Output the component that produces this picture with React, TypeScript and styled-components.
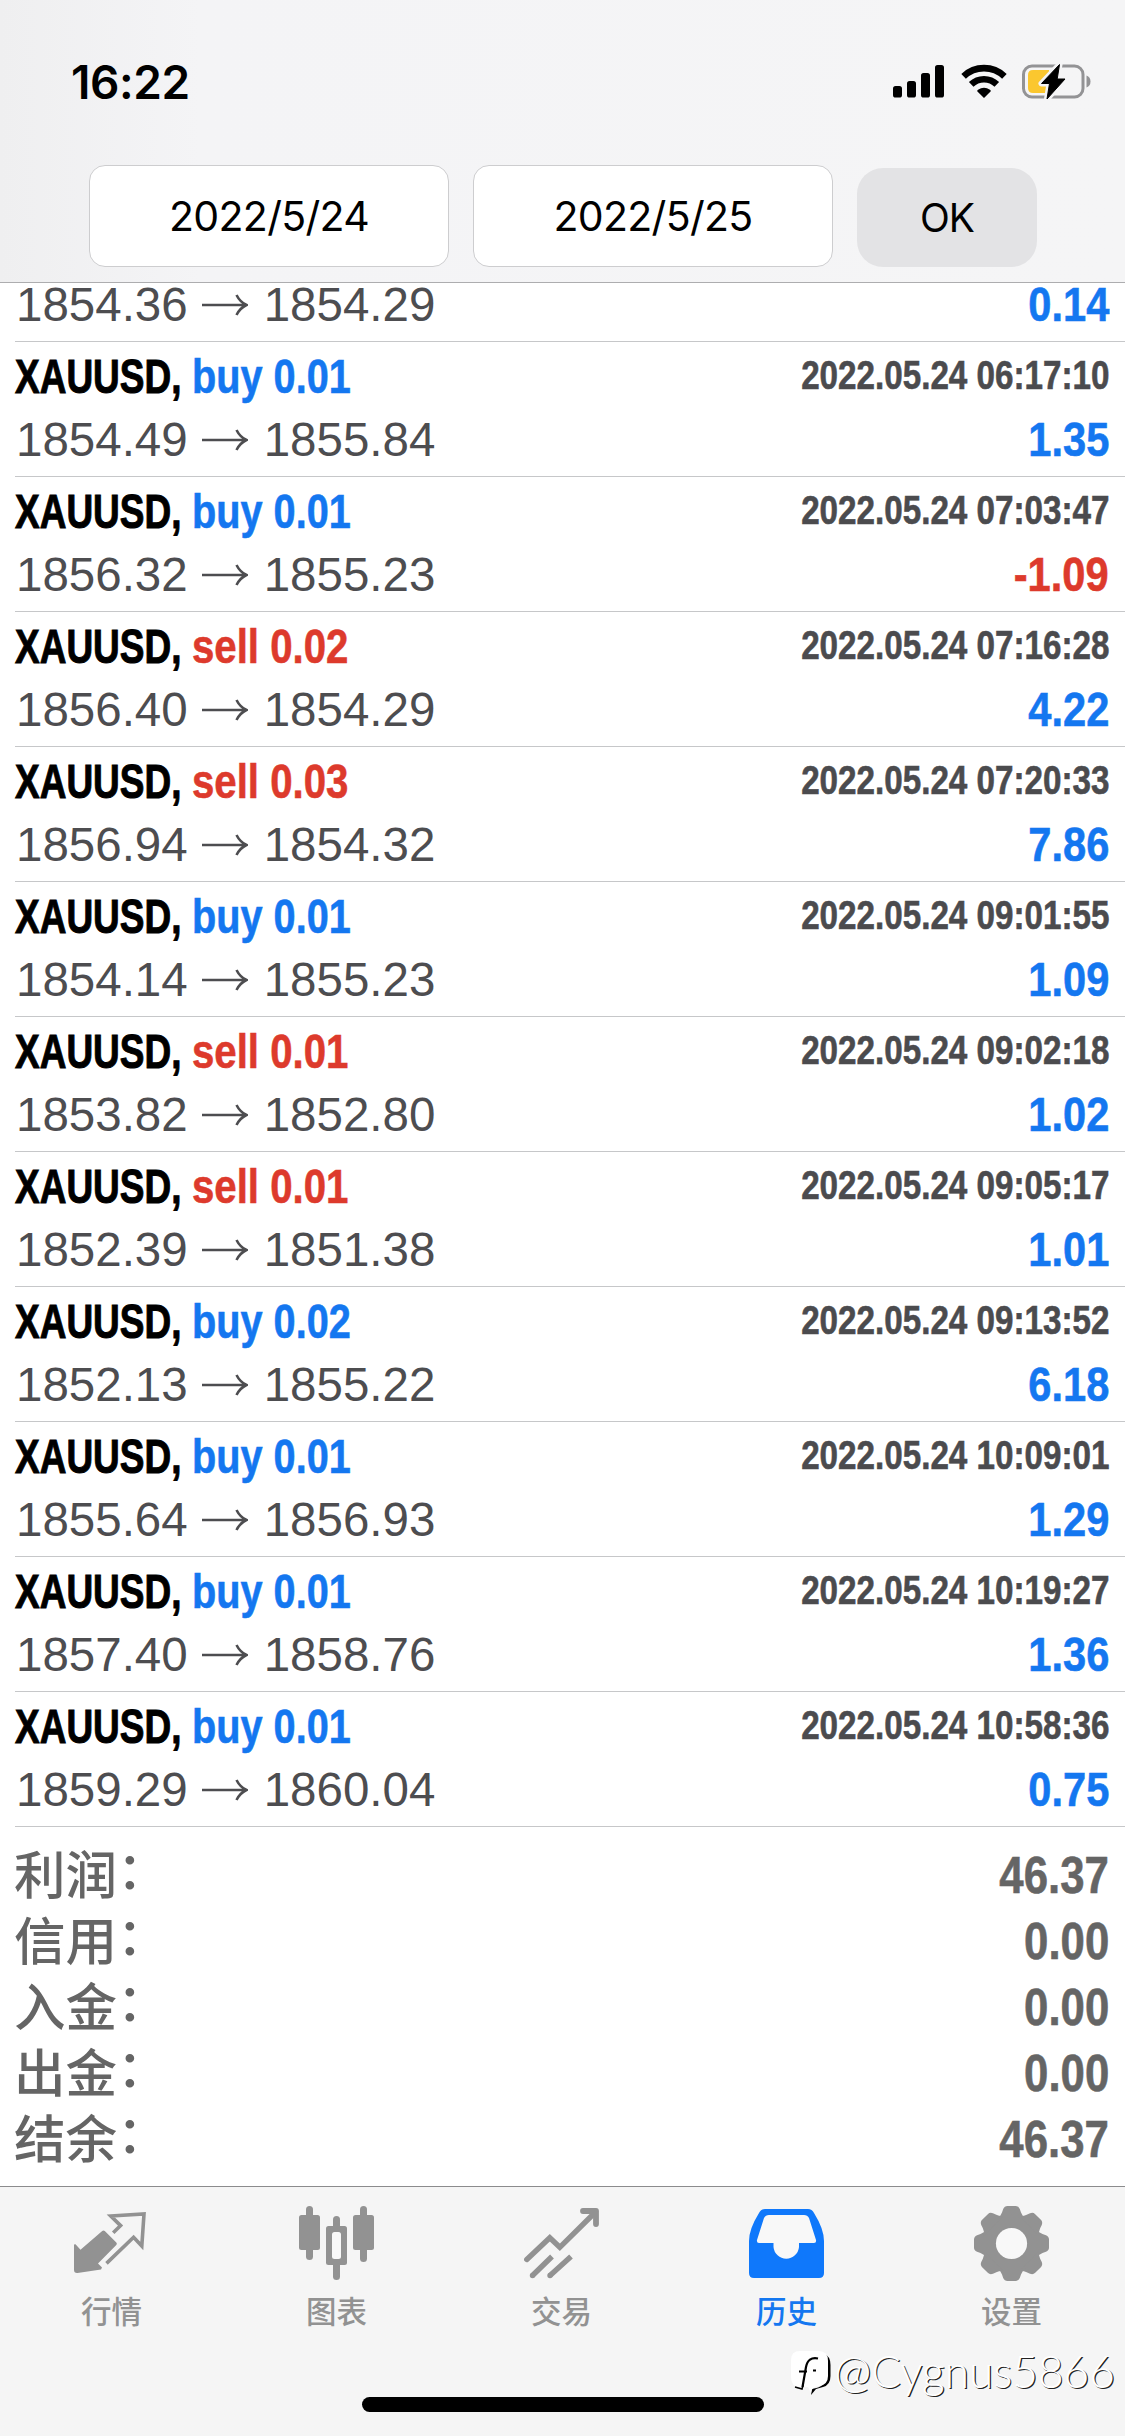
import React from "react";
import styled, { createGlobalStyle } from "styled-components";

const GlobalStyle = createGlobalStyle`
  * { box-sizing: border-box; }
  body { margin: 0; background: #fff; }
`;

const BLUE = "#1477f0";
const RED = "#dd3a2c";
const GREY = "#929292";

const Screen = styled.div`
  width: 1125px;
  height: 2436px;
  display: flex;
  flex-direction: column;
  overflow: hidden;
  background: #fff;
  font-family: "Liberation Sans", "Noto Sans CJK SC", sans-serif;
`;

const Header = styled.header`
  position: relative;
  z-index: 1;
  height: 283px;
  flex: none;
  border-bottom: 1px solid #adadaf;
  background: linear-gradient(90deg, #efeff0 0, #f4f4f6 200px, #f5f5f6 100%);
  font-family: Inter, sans-serif;
`;

const StatusBar = styled.div`
  height: 165px;
  display: flex;
  justify-content: space-between;
  align-items: flex-start;
  padding: 52px 34px 0 71px;
`;

const Clock = styled.div`
  font-size: 46px;
  line-height: 60px;
  font-weight: 600;
  letter-spacing: -0.4px;
  color: #000;
`;

const StatusIcons = styled.div`
  display: flex;
  align-items: flex-start;
  padding-top: 12px;
  svg { display: block; }
`;

const SignalSvg = styled.svg`margin-right: 16px;`;
const WifiSvg = styled.svg`margin-right: 15px;`;

const Filters = styled.div`
  display: flex;
  align-items: flex-start;
  padding-left: 89px;
`;

const DateField = styled.div`
  width: 360px;
  height: 102px;
  margin-right: 24px;
  border: 1px solid #cdcdcf;
  border-radius: 16px;
  background: #fff;
  display: flex;
  align-items: center;
  justify-content: center;
  font-size: 41px;
  letter-spacing: -0.7px;
  color: #000;
`;

const OkButton = styled.button`
  width: 180px;
  height: 99px;
  margin: 3px 0 0;
  padding: 0;
  border: 0;
  border-radius: 26px;
  background: #e3e3e5;
  font: 400 39px Inter, sans-serif;
  letter-spacing: -1px;
  color: #000;
`;

const List = styled.main`
  flex: none;
  display: flex;
  flex-direction: column;
  padding-left: 15px;
`;

const Row = styled.div<{ $clipped?: boolean }>`
  height: ${(p) => (p.$clipped ? 59 : 135)}px;
  display: flex;
  flex-direction: column;
  justify-content: flex-end;
  gap: 3px;
  padding: 0 16px 7px 0;
  border-bottom: 1px solid #c6c7c9;
`;

const Line = styled.div`
  height: 60px;
  flex: none;
  display: flex;
  align-items: flex-start;
  justify-content: space-between;
  line-height: 60px;
  white-space: nowrap;
`;

const Group = styled.div`
  display: flex;
  align-items: center;
`;

/* Bold grotesque squeezed horizontally to a condensed cut. */
const Condensed = styled.span<{ $scale: number; $right?: boolean }>`
  display: block;
  font-weight: 700;
  -webkit-text-stroke: 0.6px currentColor;
  transform: scaleX(${(p) => p.$scale});
  transform-origin: ${(p) => (p.$right ? "right" : "left")} center;
`;

const Symbol = styled(Condensed)`
  width: 177px;
  font-size: 49px;
  color: #000;
  -webkit-text-stroke-width: 1px;
`;

const Volume = styled(Condensed)<{ $side: string }>`
  font-size: 49px;
  color: ${(p) => (p.$side === "buy" ? BLUE : RED)};
`;

const Stamp = styled(Condensed)`
  font-size: 40px;
  line-height: 58px;
  color: #4b4b4e;
`;

const Profit = styled(Condensed)<{ $negative: boolean }>`
  font-size: 49px;
  color: ${(p) => (p.$negative ? RED : BLUE)};
`;

const Price = styled.span`
  font-size: 47.5px;
  line-height: 62px;
  color: #4d4d50;
`;

const PriceGroup = styled(Group)`
  padding-left: 1px;
`;

const ArrowSvg = styled.svg`
  margin: 0 16px 0 14px;
`;

const Summary = styled.section`
  flex: 1;
  padding: 15px 16px 0 14px;
  color: #656565;
`;

const SummaryLine = styled.div`
  height: 66px;
  display: flex;
  align-items: flex-start;
  justify-content: space-between;
  line-height: 66px;
`;

const SummaryLabel = styled.span`
  font: 500 51.5px/60px "Noto Sans CJK SC", sans-serif;
`;

const Colon = styled.span`
  line-height: 0;
  vertical-align: 5px;
`;

const SummaryValue = styled(Condensed)`
  font-size: 51.5px;
`;

const TabBar = styled.nav`
  position: relative;
  height: 250px;
  flex: none;
  display: grid;
  grid-template-columns: repeat(5, 225px);
  border-top: 1px solid #8b8b8d;
  background: #f5f5f5;
`;

const Tab = styled.div<{ $active?: boolean }>`
  display: flex;
  flex-direction: column;
  align-items: center;
  padding: 19px 2px 0 0;
  color: ${(p) => (p.$active ? BLUE : GREY)};
  font: 500 30.5px/44px "Noto Sans CJK SC", sans-serif;
  svg { display: block; margin-bottom: 7px; }
`;

const HomeIndicator = styled.div`
  position: absolute;
  left: 362px;
  top: 210px;
  width: 402px;
  height: 15px;
  border-radius: 8px;
  background: #000;
`;

const Watermark = styled.div`
  position: absolute;
  right: 10px;
  top: 157px;
  display: flex;
  align-items: center;
  height: 60px;
  font: 300 44.3px/54px Lato, sans-serif;
  color: #fff;
  text-shadow: 1.2px 1.2px 0.5px #222;
  white-space: nowrap;
`;

const WatermarkName = styled.span`
  height: 60px;
`;

const Signal = () => (
  <SignalSvg width="52" height="34" viewBox="0 0 52 34">
    <rect x="0" y="22" width="9" height="11.5" rx="2.6" />
    <rect x="14" y="17" width="9" height="16.5" rx="2.6" />
    <rect x="28" y="9" width="9" height="24.5" rx="2.6" />
    <rect x="42" y="1" width="9" height="32.5" rx="2.6" />
  </SignalSvg>
);

const Wifi = () => (
  <WifiSvg width="46" height="35" viewBox="0 0 46 35">
    <g fill="none" stroke="#000" strokeWidth="6.6">
      <path d="M2.6 12.3A29.5 29.5 0 0 1 43.4 12.3" />
      <path d="M10.2 20.4A18.4 18.4 0 0 1 35.8 20.4" />
    </g>
    <path d="M23 34L16.2 27.2Q16 26.4 17 25.8Q23 21.8 29 25.8Q30 26.4 29.8 27.2Z" />
  </WifiSvg>
);

const BOLT = "M37.5 0.5L19.5 19.5H27.5L25 35L43 15H35.2Z";

const Battery = () => (
  <svg width="69" height="35" viewBox="0 0 69 35">
    <rect x="1.5" y="2" width="59.5" height="31" rx="8.5" fill="none" stroke="#939395" strokeWidth="3" />
    <path d="M64.5 11.5Q68.5 13 68.5 17.5T64.5 23.5Z" fill="#939395" />
    <path d="M11 6H27V29H11Q6 29 6 24V11Q6 6 11 6Z" fill="#fbc72f" />
    <path d={BOLT} fill="#f5f5f6" stroke="#f5f5f6" strokeWidth="6" strokeLinejoin="round" />
    <path d={BOLT} stroke="#000" strokeWidth="1" strokeLinejoin="round" />
  </svg>
);

const Arrow = () => (
  <ArrowSvg width="46" height="24" viewBox="0 0 46 24" fill="none" stroke="#4d4d50" strokeWidth="2.6">
    <path d="M0 12H44M34.5 2Q38 9 44.5 12Q38 15 34.5 22" />
  </ArrowSvg>
);

const QuotesIcon = () => (
  <svg width="75" height="75" viewBox="0 0 75 75">
    <path
      d="M28.2 19.1Q29.5 18 30.8 19.1L42.3 30.4Q43.5 31.8 42.3 33.1L24 51.5L28 55.6L27 57.6L3.5 61Q0 61.3 0 57.8V32.5L1.5 32.2L6.5 37.8Z"
      transform="translate(0 6)"
      fill="currentColor"
    />
    <path
      d="M39.2 20.8L46.6 13.6L36.8 4L70 2L67.8 34L59.6 25.2L32.5 51.4"
      transform="translate(0 6)"
      fill="none"
      stroke="currentColor"
      strokeWidth="3.6"
    />
  </svg>
);

const ChartIcon = () => (
  <svg width="75" height="75" viewBox="0 0 75 75" fill="currentColor">
    <rect x="0" y="9" width="21" height="35" rx="2.5" />
    <rect x="7" y="0" width="7" height="54" rx="3.5" />
    <rect x="54" y="9" width="21" height="35" rx="2.5" />
    <rect x="61" y="0" width="7" height="56" rx="3.5" />
    <rect x="34" y="10" width="7" height="64" rx="3.5" />
    <rect x="27" y="20" width="21" height="39" rx="2.5" />
    <rect x="33" y="26" width="9" height="27" rx="2.5" fill="#f8f8f8" />
  </svg>
);

const TradeIcon = () => (
  <svg width="75" height="75" viewBox="0 0 75 75" fill="none" stroke="currentColor" strokeWidth="5.4">
    <path d="M2.8 53.5L25.8 31.8L35.8 41.3L70 7.5" strokeLinecap="round" />
    <path d="M59 5H72V18" strokeLinecap="round" strokeLinejoin="round" strokeWidth="5.8" />
    <path d="M8.5 69.5L28 50.5M26 69.5L47 50.5" />
    <g fill="currentColor" stroke="none">
      <circle cx="8.5" cy="69.5" r="2.7" />
      <circle cx="26" cy="69.5" r="2.7" />
    </g>
  </svg>
);

const HistoryIcon = () => (
  <svg width="75" height="75" viewBox="0 0 75 75">
    <path
      fill="#0f78fb"
      d="M16 3H59Q63 3 65 7Q75 23 75 35V67Q75 72 70 72H5Q0 72 0 67V35Q0 23 10 7Q12 3 16 3Z"
    />
    <path
      fill="#f8f8f8"
      d="M20 9H55Q58.500 9 60 12L67 34Q67.500 37 65 37H50V41A12.800 12.800 0 0 1 24.500 41V37H10Q7.500 37 8 34L15 12Q16.500 9 20 9Z"
    />
  </svg>
);

const GearIcon = () => (
  <svg width="75" height="75" viewBox="-37.500 -37.500 75 75">
    <g fill="currentColor">
      <circle r="29" />
      {[0, 45, 90, 135, 180, 225, 270, 315].map((a) => (
        <path
          key={a}
          transform={`rotate(${a})`}
          d="M-14 -25Q-11 -27 -9.500 -31L-8.300 -34.500Q-7 -37.500 -4 -37.500H4Q7 -37.500 8.300 -34.500L9.500 -31Q11 -27 14 -25Z"
        />
      ))}
    </g>
    <circle r="15.600" fill="#f8f8f8" />
  </svg>
);

const LogoIcon = () => (
  <svg width="44" height="48" viewBox="0 0 44 48">
    <path d="M34 4Q40.500 6 40.500 15V26Q40.500 35 33 37L26 39L21 45L22 39Q36 37 37 26Z" fill="#000" />
    <path d="M10 1H29Q38 1 38 11V26Q38 35 29 36Q21 37 21 43L18 37H10Q1 37 1 27V10Q1 1 10 1Z" fill="#fff" />
    <path d="M28 8.500Q18 6.500 16 17L12.500 37M9 21.500H17M23 20.500H26" fill="none" stroke="#000" strokeWidth="2.200" />
    <path d="M5 37L12 39L13 35" fill="none" stroke="#000" strokeWidth="1.500" />
  </svg>
);

type Deal = {
  side: "buy" | "sell";
  volume: string;
  time: string;
  open: string;
  close: string;
  profit: string;
};

const deals: Deal[] = [
  { side: "buy", volume: "0.01", time: "2022.05.24 06:17:10", open: "1854.49", close: "1855.84", profit: "1.35" },
  { side: "buy", volume: "0.01", time: "2022.05.24 07:03:47", open: "1856.32", close: "1855.23", profit: "-1.09" },
  { side: "sell", volume: "0.02", time: "2022.05.24 07:16:28", open: "1856.40", close: "1854.29", profit: "4.22" },
  { side: "sell", volume: "0.03", time: "2022.05.24 07:20:33", open: "1856.94", close: "1854.32", profit: "7.86" },
  { side: "buy", volume: "0.01", time: "2022.05.24 09:01:55", open: "1854.14", close: "1855.23", profit: "1.09" },
  { side: "sell", volume: "0.01", time: "2022.05.24 09:02:18", open: "1853.82", close: "1852.80", profit: "1.02" },
  { side: "sell", volume: "0.01", time: "2022.05.24 09:05:17", open: "1852.39", close: "1851.38", profit: "1.01" },
  { side: "buy", volume: "0.02", time: "2022.05.24 09:13:52", open: "1852.13", close: "1855.22", profit: "6.18" },
  { side: "buy", volume: "0.01", time: "2022.05.24 10:09:01", open: "1855.64", close: "1856.93", profit: "1.29" },
  { side: "buy", volume: "0.01", time: "2022.05.24 10:19:27", open: "1857.40", close: "1858.76", profit: "1.36" },
  { side: "buy", volume: "0.01", time: "2022.05.24 10:58:36", open: "1859.29", close: "1860.04", profit: "0.75" },
];

const totals = [
  ["利润", "46.37"],
  ["信用", "0.00"],
  ["入金", "0.00"],
  ["出金", "0.00"],
  ["结余", "46.37"],
];

const PriceLine = ({ open, close, profit }: Pick<Deal, "open" | "close" | "profit">) => (
  <Line>
    <PriceGroup>
      <Price>{open}</Price>
      <Arrow />
      <Price>{close}</Price>
    </PriceGroup>
    <Profit $scale={0.85} $right $negative={profit.startsWith("-")}>
      {profit}
    </Profit>
  </Line>
);

export default function App() {
  return (
    <Screen>
      <GlobalStyle />
      <Header>
        <StatusBar>
          <Clock>16:22</Clock>
          <StatusIcons>
            <Signal />
            <Wifi />
            <Battery />
          </StatusIcons>
        </StatusBar>
        <Filters>
          <DateField>2022/5/24</DateField>
          <DateField>2022/5/25</DateField>
          <OkButton>OK</OkButton>
        </Filters>
      </Header>
      <List>
        <Row $clipped>
          <PriceLine open="1854.36" close="1854.29" profit="0.14" />
        </Row>
        {deals.map((d) => (
          <Row key={d.time}>
            <Line>
              <Group>
                <Symbol $scale={0.755}>XAUUSD,</Symbol>
                <Volume $scale={d.side === "buy" ? 0.81 : 0.82} $side={d.side}>
                  {d.side} {d.volume}
                </Volume>
              </Group>
              <Stamp $scale={0.83} $right>
                {d.time}
              </Stamp>
            </Line>
            <PriceLine open={d.open} close={d.close} profit={d.profit} />
          </Row>
        ))}
      </List>
      <Summary>
        {totals.map(([label, value]) => (
          <SummaryLine key={label}>
            <SummaryLabel>
              {label}
              <Colon>：</Colon>
            </SummaryLabel>
            <SummaryValue $scale={0.85} $right>
              {value}
            </SummaryValue>
          </SummaryLine>
        ))}
      </Summary>
      <TabBar>
        <Tab>
          <QuotesIcon />
          行情
        </Tab>
        <Tab>
          <ChartIcon />
          图表
        </Tab>
        <Tab>
          <TradeIcon />
          交易
        </Tab>
        <Tab $active>
          <HistoryIcon />
          历史
        </Tab>
        <Tab>
          <GearIcon />
          设置
        </Tab>
        <HomeIndicator />
        <Watermark>
          <LogoIcon />
          <WatermarkName>@Cygnus5866</WatermarkName>
        </Watermark>
      </TabBar>
    </Screen>
  );
}
